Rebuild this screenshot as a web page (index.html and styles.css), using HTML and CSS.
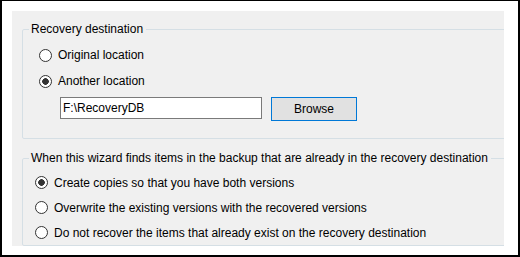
FILE: index.html
```html
<!DOCTYPE html>
<html>
    <head>
        <meta charset='utf-8'/>
        <title>Recovery</title>
        <link rel="stylesheet" href="styles.css">
    </head>
    <body>
        <div class="frame">
            <div class="panel">
                <fieldset class="group group-dest">
                    <legend>Recovery destination</legend>
                    <label class="opt"><input type="radio" name="dest"><span>Original location</span></label>
                    <label class="opt"><input type="radio" name="dest" checked><span>Another location</span></label>
                    <div class="path-row">
                        <input class="path" type="text" value="F:\RecoveryDB">
                        <button class="browse">Browse</button>
                    </div>
                </fieldset>
                <fieldset class="group group-conflict">
                    <legend>When this wizard finds items in the backup that are already in the recovery destination</legend>
                    <label class="opt"><input type="radio" name="mode" checked><span>Create copies so that you have both versions</span></label>
                    <label class="opt"><input type="radio" name="mode"><span>Overwrite the existing versions with the recovered versions</span></label>
                    <label class="opt"><input type="radio" name="mode"><span>Do not recover the items that already exist on the recovery destination</span></label>
                </fieldset>
            </div>
        </div>
    </body>
</html>
```
FILE: styles.css
```css
* {
    margin: 0;
    padding: 0;
    box-sizing: border-box;
}

body {
    background: #fff;
    font-family: "Liberation Sans", Arial, sans-serif;
    font-size: 12px;
    color: #000;
}

.frame {
    width: 520px;
    height: 257px;
    border: 2px solid #000;
    border-top-width: 1px;
    padding: 10px 14px 9px 10px;
}

.panel {
    height: 235px;
    background: #f0f0f0;
    overflow: hidden;
    padding-top: 10px;
    padding-left: 10px;
}

.group {
    width: 520px;
    border: 1px solid #d5dfe5;
    border-radius: 2px;
    padding: 0 0 0 6px;
    min-inline-size: 0;
}

.group legend {
    padding: 0 3px 0 2px;
    line-height: 16px;
    height: 16px;
}

.group-dest {
    padding-top: 5px;
    padding-bottom: 17px;
}

.group-conflict {
    margin-top: 11px;
    padding-top: 4px;
}

.opt {
    display: flex;
    align-items: center;
    height: 26px;
    padding-left: 10px;
}

.group-conflict .opt {
    height: 25px;
    padding-left: 6px;
}

.opt input {
    appearance: none;
    width: 13px;
    height: 13px;
    border: 1px solid #333;
    border-radius: 50%;
    background: #fff;
    margin-right: 6px;
    flex: none;
}

.opt input:checked {
    background: radial-gradient(circle, #333 0 3px, #fff 3.6px);
}

.path-row {
    display: flex;
    align-items: flex-start;
    gap: 9px;
    margin-top: 3px;
    padding-left: 31px;
    height: 24px;
}

.path {
    width: 202px;
    height: 22px;
    border: 1px solid #7a7a7a;
    background: #fff;
    padding: 0 2px;
    font: inherit;
    color: #000;
    outline: none;
}

.browse {
    width: 86px;
    height: 24px;
    border: 1px solid #0078d7;
    background: #e1e1e1;
    font: inherit;
    color: #000;
}
```
